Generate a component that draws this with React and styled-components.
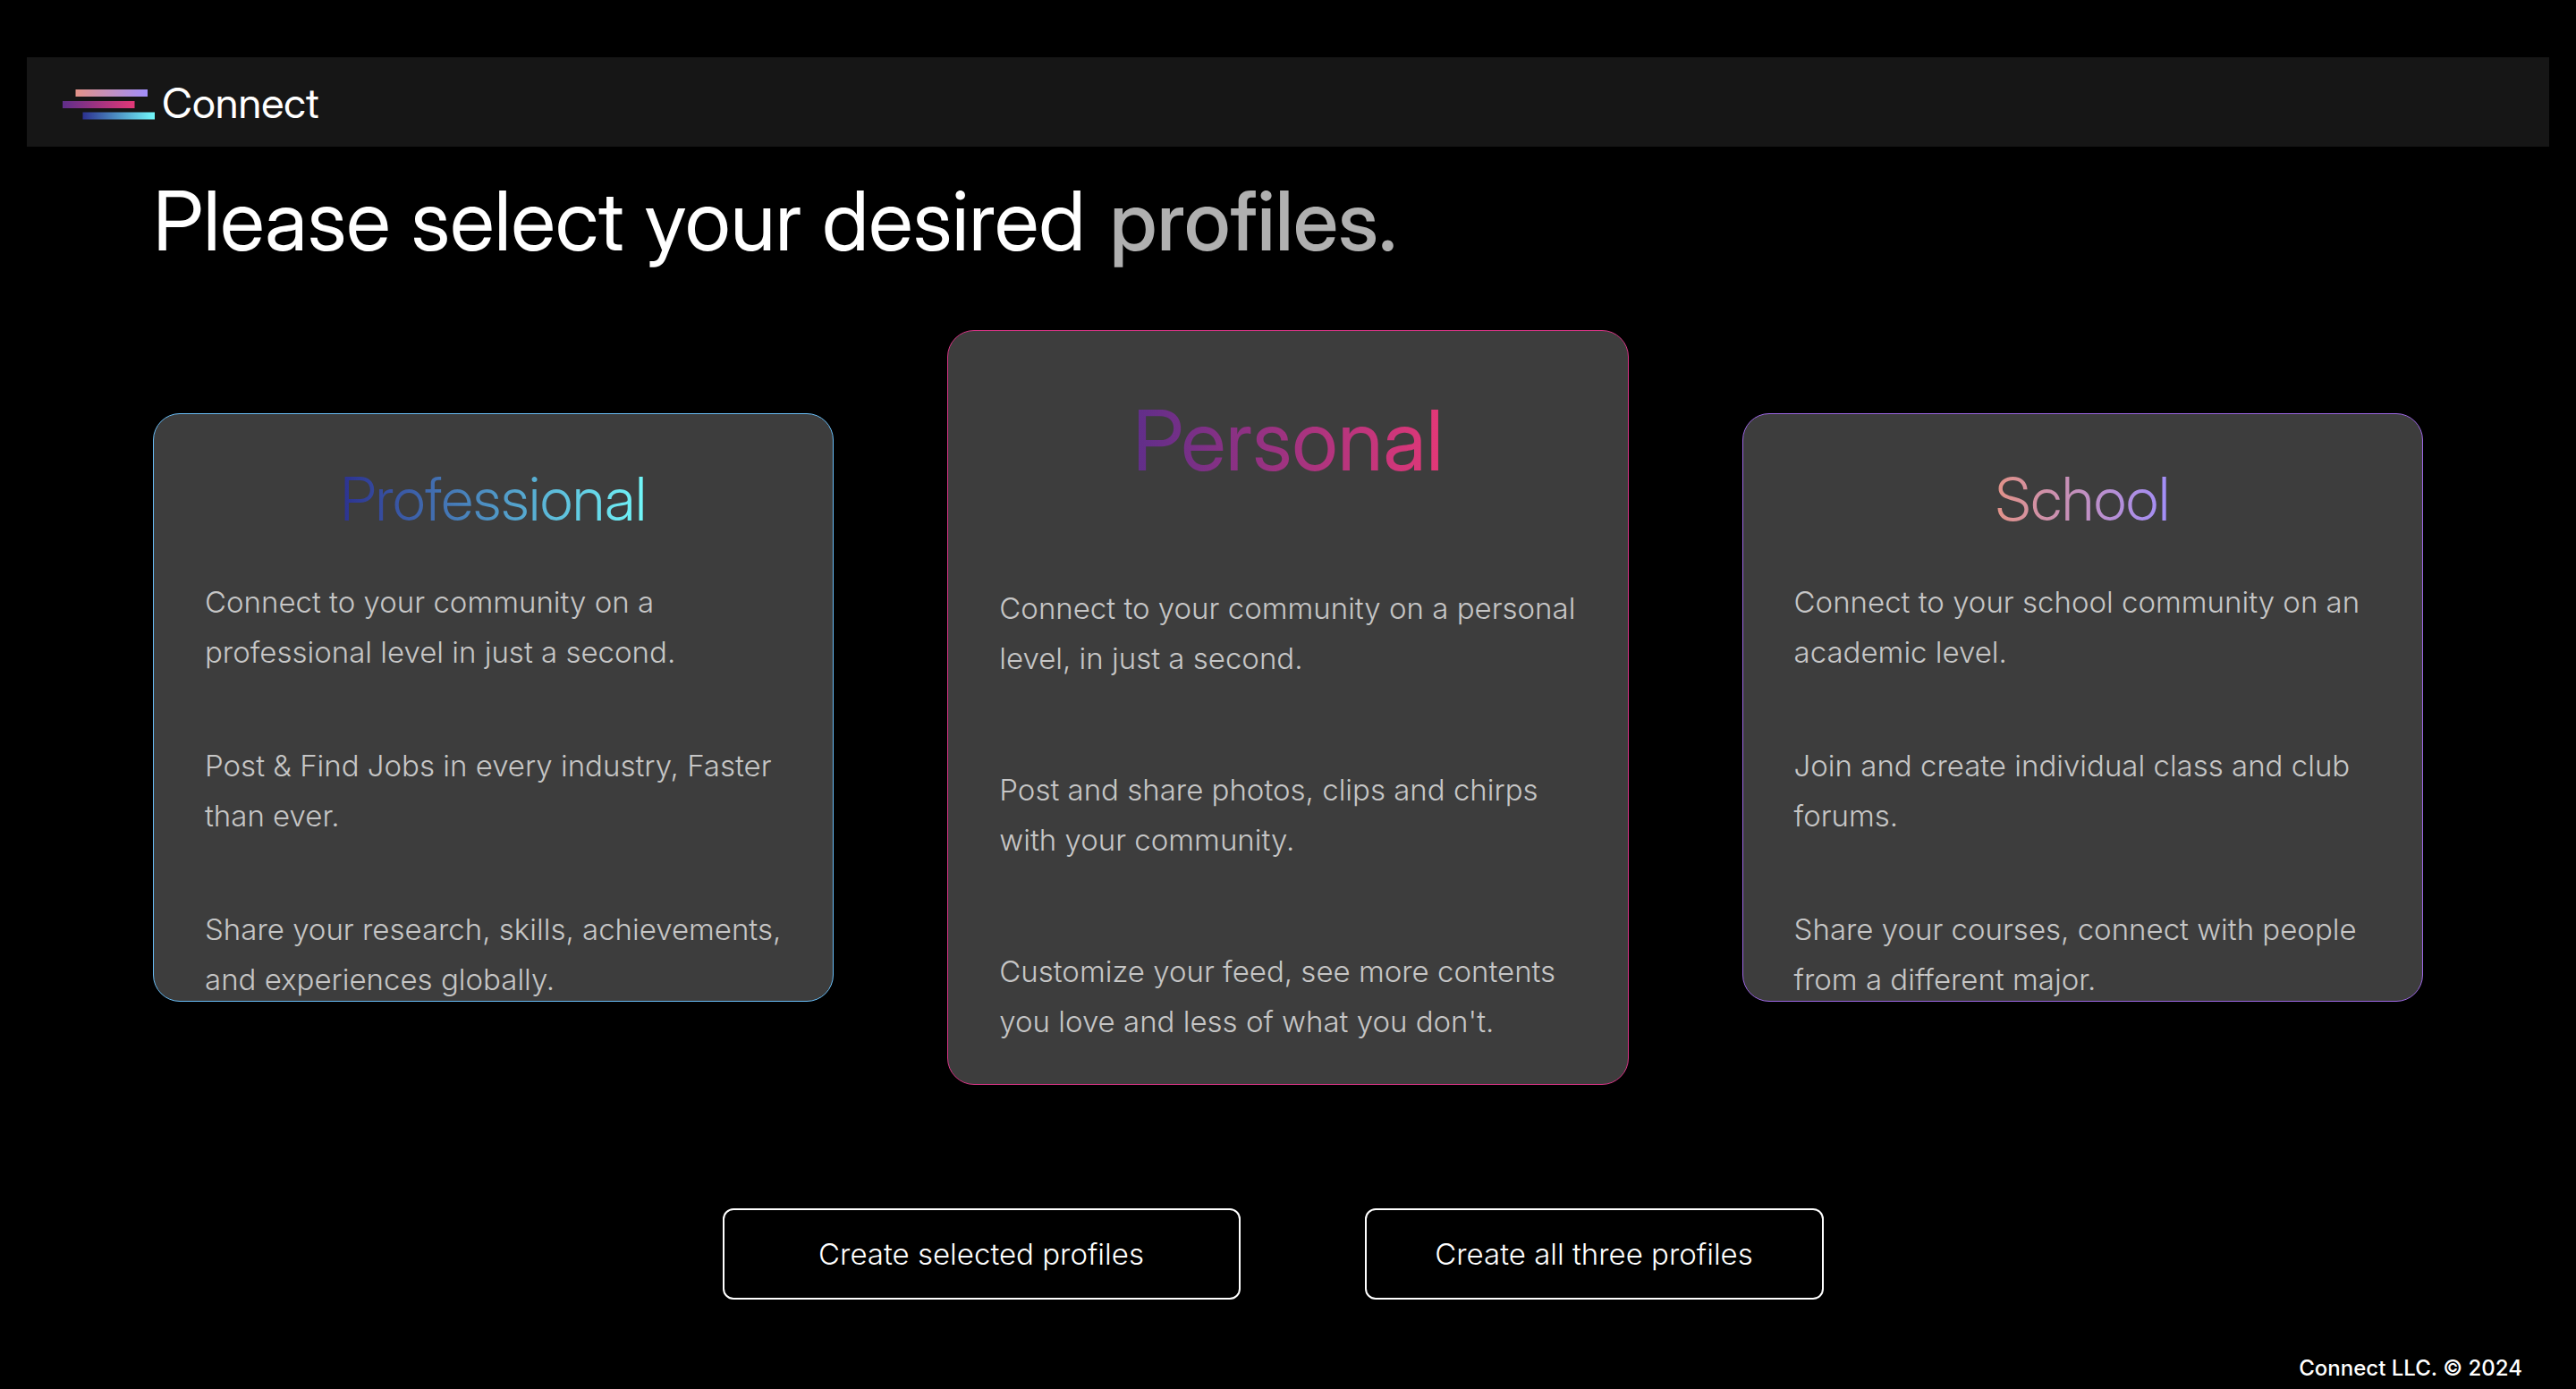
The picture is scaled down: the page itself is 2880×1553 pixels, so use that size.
import React from "react";
import styled, { createGlobalStyle } from "styled-components";

const displayFont = `"Inter Display", Inter, "Liberation Sans", sans-serif`;

const GlobalStyle = createGlobalStyle`
  *, *::before, *::after { box-sizing: border-box; }
  body {
    margin: 0;
    background: #000;
    color: #fff;
    font-family: Inter, "Liberation Sans", sans-serif;
  }
  h1, h2, p { margin: 0; font-weight: 400; }
`;

const gradients = {
  professional: ["#2c3190", "#72f9fb"],
  personal: ["#5f2e8a", "#e33877"],
  school: ["#e29288", "#a18efb"],
};

const Page = styled.div`
  min-height: 100vh;
  display: flex;
  flex-direction: column;
  padding: 64px 30px 0;
`;

const Header = styled.header`
  display: flex;
  align-items: center;
  height: 100px;
  padding: 2px 40px 0;
  background: #161616;
`;

const Brand = styled.a`
  display: flex;
  align-items: center;
  gap: 8px;
  color: #fff;
  text-decoration: none;
  font-family: ${displayFont};
  font-size: 47px;
  line-height: 60px;
`;

const Main = styled.main`
  display: flex;
  flex-direction: column;
  padding: 0 5%;
`;

const Heading = styled.h1`
  padding: 23px 0 0;
  font-family: ${displayFont};
  font-size: 92px;
  line-height: 120px;
`;

const Muted = styled.span`
  margin-left: 4px;
  color: #b0b0b0;
  font-weight: 500;
`;

const Cards = styled.section`
  display: flex;
  align-items: center;
  justify-content: space-between;
  margin-top: 62px;
`;

const Card = styled.article`
  width: 30%;
  height: ${(p) => (p.$featured ? 844 : 658)}px;
  padding: ${(p) => (p.$featured ? 62 : 53)}px 57px 0;
  border: 1px solid ${(p) => p.$border};
  border-radius: 30px;
  background: #3d3d3d;
`;

const CardTitle = styled.h2`
  width: fit-content;
  margin: 0 auto;
  font-family: ${displayFont};
  font-size: ${(p) => (p.$featured ? 93 : 67)}px;
  font-weight: ${(p) => (p.$featured ? 400 : 300)};
  line-height: ${(p) => (p.$featured ? 120 : 84)}px;
  background: linear-gradient(90deg, ${(p) => p.$from}, ${(p) => p.$to});
  background-clip: text;
  -webkit-background-clip: text;
  color: transparent;
`;

const Points = styled.div`
  display: flex;
  flex-direction: column;
  gap: ${(p) => (p.$featured ? 91 : 71)}px;
  margin-top: ${(p) => (p.$featured ? 100 : 45)}px;
`;

const Point = styled.p`
  color: #c6c6c6;
  font-size: 33px;
  font-weight: 300;
  line-height: 56px;
`;

const Actions = styled.div`
  display: flex;
  justify-content: center;
  gap: 139px;
  margin-top: 138px;
  padding-right: 34px;
`;

const Action = styled.button`
  height: 102px;
  width: ${(p) => p.$width}px;
  border: 2px solid #fff;
  border-radius: 12px;
  background: transparent;
  color: #fff;
  font-family: inherit;
  font-size: 33px;
  font-weight: 300;
  cursor: pointer;
`;

const Footer = styled.footer`
  margin-top: auto;
  padding: 0 30px 8px;
  text-align: right;
  font-size: 24px;
  font-weight: 500;
  line-height: 30px;
`;

const profiles = [
  {
    id: "professional",
    title: "Professional",
    border: "#68bcf5",
    points: [
      "Connect to your community on a professional level in just a second.",
      "Post & Find Jobs in every industry, Faster than ever.",
      "Share your research, skills, achievements, and experiences globally.",
    ],
  },
  {
    id: "personal",
    title: "Personal",
    border: "#d63384",
    featured: true,
    points: [
      "Connect to your community on a personal level, in just a second.",
      "Post and share photos, clips and chirps with your community.",
      "Customize your feed, see more contents you love and less of what you don't.",
    ],
  },
  {
    id: "school",
    title: "School",
    border: "#9b66e2",
    points: [
      "Connect to your school community on an academic level.",
      "Join and create individual class and club forums.",
      "Share your courses, connect with people from a different major.",
    ],
  },
];

const bars = [
  { id: "school", x: 14.5, y: 3 },
  { id: "personal", x: 0, y: 16 },
  { id: "professional", x: 22.5, y: 28.5 },
];

function Logo() {
  return (
    <svg width="103" height="38" viewBox="0 0 103 38" aria-hidden="true">
      <defs>
        {bars.map(({ id }) => (
          <linearGradient key={id} id={`bar-${id}`}>
            <stop offset="0" stopColor={gradients[id][0]} />
            <stop offset="1" stopColor={gradients[id][1]} />
          </linearGradient>
        ))}
      </defs>
      {bars.map(({ id, x, y }) => (
        <rect key={id} x={x} y={y + 1} width="80.5" height="8" fill={`url(#bar-${id})`} />
      ))}
    </svg>
  );
}

export default function App() {
  return (
    <Page>
      <GlobalStyle />
      <Header>
        <Brand href="#">
          <Logo />
          Connect
        </Brand>
      </Header>
      <Main>
        <Heading>
          Please select your desired <Muted>profiles.</Muted>
        </Heading>
        <Cards>
          {profiles.map(({ id, title, border, featured, points }) => (
            <Card key={id} $border={border} $featured={featured}>
              <CardTitle $featured={featured} $from={gradients[id][0]} $to={gradients[id][1]}>
                {title}
              </CardTitle>
              <Points $featured={featured}>
                {points.map((text) => (
                  <Point key={text}>{text}</Point>
                ))}
              </Points>
            </Card>
          ))}
        </Cards>
        <Actions>
          <Action type="button" $width={579}>Create selected profiles</Action>
          <Action type="button" $width={513}>Create all three profiles</Action>
        </Actions>
      </Main>
      <Footer>Connect LLC. © 2024</Footer>
    </Page>
  );
}
